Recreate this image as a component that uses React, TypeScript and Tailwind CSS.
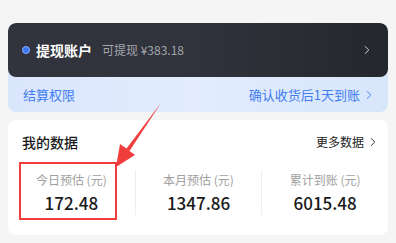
import { ChevronRight } from "lucide-react";

const font = { fontFamily: '"Noto Sans CJK SC", "Noto Sans", sans-serif' };

type Stat = { label: string; value: string };

const stats: Stat[] = [
  { label: "今日预估 (元)", value: "172.48" },
  { label: "本月预估 (元)", value: "1347.86" },
  { label: "累计到账 (元)", value: "6015.48" },
];

export default function App() {
  return (
    <div className="relative min-h-[243px] bg-[#f5f5f5] px-2 pt-[23px]" style={font}>
      <div className="overflow-hidden rounded-lg bg-gradient-to-r from-[#dae6fc] via-[#e2ecfd] to-[#d8e6fc]">
        <div className="flex h-[54px] items-center rounded-lg bg-gradient-to-r from-[#31343c] via-[#30333b] to-[#24272d] pl-[14px] pr-[14px]">
          <span className="h-[8px] w-[8px] rounded-full border border-[#8fb0ff] bg-[#3c74f6]" />
          <span className="ml-[6px] text-[14px] font-semibold leading-none text-white">提现账户</span>
          <span className="ml-[10px] text-[12px] leading-none text-[#a3a6ad]">可提现 ¥383.18</span>
          <ChevronRight className="ml-auto h-[14px] w-[14px] text-[#d9dbe0]" strokeWidth={1.6} />
        </div>
        <div className="flex h-[35px] items-center justify-between pl-[15px] pr-[12px] text-[13px] leading-none text-[#3f7df0]">
          <span>结算权限</span>
          <span className="flex items-center">
            确认收货后1天到账
            <ChevronRight className="ml-[2px] h-[14px] w-[14px]" strokeWidth={1.6} />
          </span>
        </div>
      </div>

      <div className="mt-2 h-[115px] rounded-lg bg-white pt-[13px]">
        <div className="flex h-[18px] items-center justify-between pl-[14px] pr-[8px]">
          <span className="text-[14px] font-medium leading-none text-[#1a1a1a]">我的数据</span>
          <span className="flex items-center text-[12px] leading-none text-[#222]">
            更多数据
            <ChevronRight className="ml-[2px] h-[14px] w-[14px]" strokeWidth={1.6} />
          </span>
        </div>
        <div className="mt-[19px] grid grid-cols-3">
          {stats.map((s, i) => (
            <div
              key={s.label}
              className={`flex h-[45px] flex-col items-center pt-[2px] ${i > 0 ? "border-l border-[#eeeeee]" : ""}`}
            >
              <span className="h-[16px] text-[12px] leading-[16px] text-[#a0a0a0]">{s.label}</span>
              <span className="mt-[4px] h-[22px] text-[17px] font-medium leading-[22px] text-[#1a1a1a]">
                {s.value}
              </span>
            </div>
          ))}
        </div>
      </div>

      {/* annotation overlay */}
      <div className="pointer-events-none absolute left-[19px] top-[162px] h-[58px] w-[98px] border-2 border-[#f23d3d]" />
      <svg className="pointer-events-none absolute left-0 top-0" width="396" height="243">
        <polygon
          points="161,103 129.5,151 135,155 116,167 120,144 126.5,148.5"
          fill="#f23d3d"
        />
      </svg>
    </div>
  );
}
